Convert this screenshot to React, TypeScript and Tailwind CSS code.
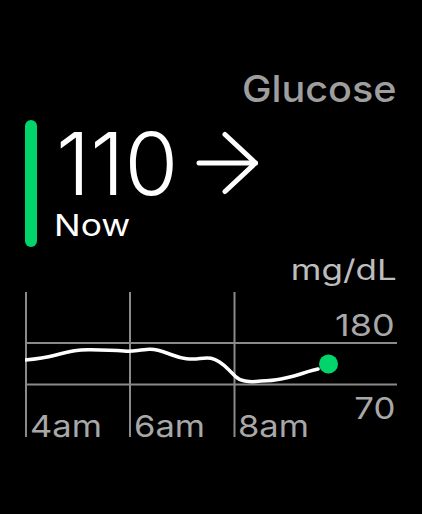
import React from "react";

// glucose trace, chart-local coords (chart box is 372 x 145)
const trace = [
  [0, 68], [18, 66.5], [42, 60], [57, 57.5], [75, 58], [93, 58.5], [105, 59.5],
  [120, 57.5], [128, 57], [138, 59.5], [155, 66], [168, 67.5], [182, 65.5],
  [190, 67], [199, 73], [207, 81], [214, 88], [226, 90], [236, 89], [247, 88.5],
  [256, 87], [265, 85], [273, 83], [283, 79.5], [293, 77],
];

// smooth the trace with quadratic segments through midpoints
const tracePath = () => {
  let d = `M${trace[0][0]} ${trace[0][1]}`;
  for (let i = 1; i < trace.length - 1; i++) {
    const [x, y] = trace[i];
    const [nx, ny] = trace[i + 1];
    d += ` Q${x} ${y} ${(x + nx) / 2} ${(y + ny) / 2}`;
  }
  const last = trace[trace.length - 1];
  return d + ` L${last[0]} ${last[1]}`;
};

const ArrowRight = () => (
  <svg width="63" height="64" viewBox="0 0 63 64" fill="none" className="mt-[11px] ml-[18px]">
    <path d="M3 32 H59.5" stroke="white" strokeWidth="5" strokeLinecap="round" />
    <path d="M29 3.5 L59.5 32 L29 60.5" stroke="white" strokeWidth="5" strokeLinecap="round" strokeLinejoin="round" />
  </svg>
);

const Chart = () => (
  <div className="relative w-[372px] h-[145px] ml-[25px]">
    <svg width="372" height="145" viewBox="0 0 372 145" className="absolute inset-0">
      {/* grid */}
      {[1, 105, 209.5].map((x) => (
        <line key={x} x1={x} y1="0" x2={x} y2="145" stroke="#8a8a8a" strokeWidth="2" />
      ))}
      <line x1="0" y1="51" x2="372" y2="51" stroke="#8a8a8a" strokeWidth="2" />
      <line x1="0" y1="92.5" x2="372" y2="92.5" stroke="#8a8a8a" strokeWidth="2" />
      {/* trace */}
      <path d={tracePath()} fill="none" stroke="white" strokeWidth="3.5" strokeLinecap="round" strokeLinejoin="round" />
      <circle cx="303.5" cy="72" r="9.5" fill="#00d46a" />
    </svg>

    {/* labels */}
    <span className="absolute right-[2px] top-[18px] text-[30px] leading-none text-[#a8a8a8] origin-right scale-x-[1.2]">180</span>
    <span className="absolute right-[2px] top-[101px] text-[30px] leading-none text-[#a8a8a8] origin-right scale-x-[1.16]">70</span>
    <span className="absolute left-[5px] top-[119px] text-[30px] leading-none text-[#a8a8a8] origin-left scale-x-[1.15]">4am</span>
    <span className="absolute left-[109px] top-[119px] text-[30px] leading-none text-[#a8a8a8] origin-left scale-x-[1.15]">6am</span>
    <span className="absolute left-[213px] top-[119px] text-[30px] leading-none text-[#a8a8a8] origin-left scale-x-[1.15]">8am</span>
  </div>
);

export default function App() {
  return (
    <div className="w-[422px] h-[514px] bg-black text-white font-['Inter',sans-serif] pt-[70px] overflow-hidden">
      {/* title */}
      <div className="pr-[25px] text-right text-[37px] leading-none font-medium text-[#9e9e9e]">
        <span className="inline-block origin-right scale-x-[1.07]">Glucose</span>
      </div>

      {/* current reading */}
      <div className="flex mt-[13px] pl-[25px]">
        <div className="w-[12px] h-[127px] rounded-full bg-[#00d46a]" />
        <div className="flex flex-col items-start ml-[17px]">
          <div className="flex items-start">
            <span className="ml-[2px] text-[87px] leading-none font-light">110</span>
            <ArrowRight />
          </div>
          <span className="inline-block mt-[3px] text-[30px] leading-none origin-left scale-x-[1.18]">Now</span>
        </div>
      </div>

      {/* unit */}
      <div className="mt-[9px] pr-[25px] text-right text-[28px] leading-none text-[#bdbdbd]">
        <span className="inline-block origin-right scale-x-[1.25]">mg/dL</span>
      </div>

      <div className="mt-[8px]">
        <Chart />
      </div>
    </div>
  );
}
